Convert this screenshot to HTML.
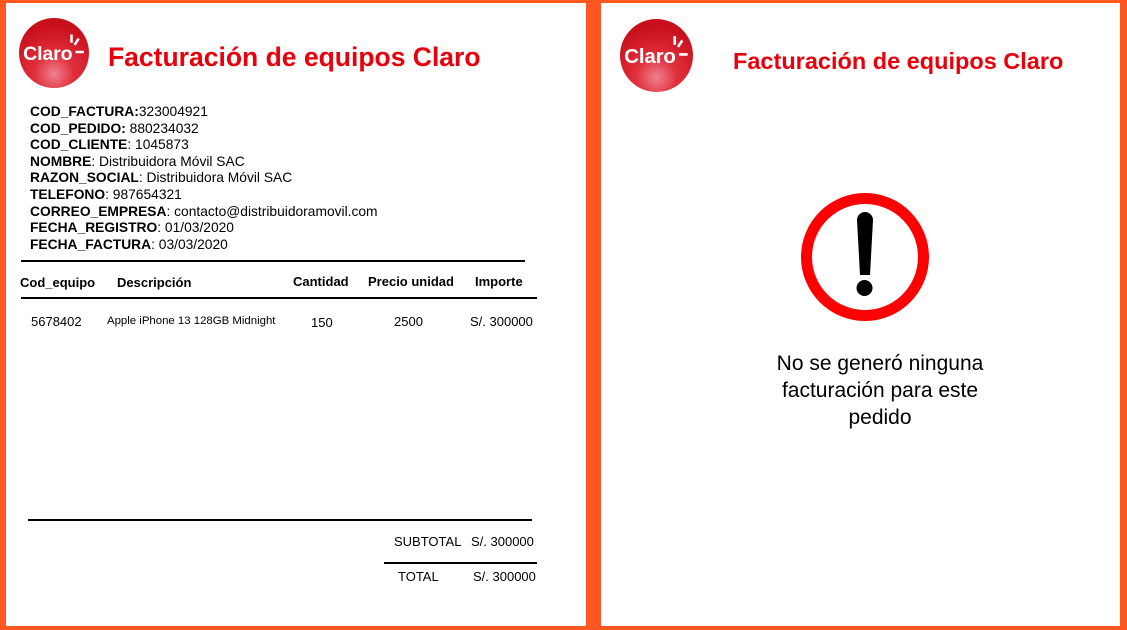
<!DOCTYPE html>
<html><head><meta charset="utf-8"><style>
*{margin:0;padding:0;box-sizing:border-box}
body{width:1127px;height:630px;background:#FF5722;position:relative;overflow:hidden;font-family:"Liberation Sans",sans-serif;color:#000}
.p{position:absolute;background:#fff}
.a{position:absolute;white-space:nowrap;line-height:1}
.r{position:absolute;background:#000;height:2px}
.t{color:#e8000b;font-weight:bold}
.info{position:absolute;left:30px;top:104px;font-size:13.8px;line-height:16.6px}
.info b{font-weight:bold}
.h{font-size:13px;font-weight:bold}
.d{font-size:13px}
</style></head><body>
<div class="p" style="left:6px;top:3px;width:580px;height:623px"></div>
<div class="p" style="left:601px;top:3px;width:519px;height:623px"></div>

<svg style="position:absolute;left:19px;top:18px" width="70" height="70" viewBox="0 0 68 68">
<defs><radialGradient id="g1" cx="50%" cy="80%" r="70%"><stop offset="0" stop-color="#f08090"/><stop offset="0.4" stop-color="#e0303c"/><stop offset="1" stop-color="#c8101c"/></radialGradient></defs>
<circle cx="34" cy="34" r="34" fill="url(#g1)"/>
<text x="4" y="41" font-family="Liberation Sans" font-weight="bold" font-size="19" fill="#fff" textLength="48">Claro</text>
<path d="M51 16v8M58 20l-4 6M55 33h8" stroke="#fff" stroke-width="2.4"/>
</svg>
<div class="a t" style="left:108px;top:44px;font-size:26.5px">Facturación de equipos Claro</div>

<div class="info">
<div><b>COD_FACTURA:</b>323004921</div>
<div><b>COD_PEDIDO:</b> 880234032</div>
<div><b>COD_CLIENTE</b>: 1045873</div>
<div><b>NOMBRE</b>: Distribuidora Móvil SAC</div>
<div><b>RAZON_SOCIAL</b>: Distribuidora Móvil SAC</div>
<div><b>TELEFONO</b>: 987654321</div>
<div><b>CORREO_EMPRESA</b>: contacto@distribuidoramovil.com</div>
<div><b>FECHA_REGISTRO</b>: 01/03/2020</div>
<div><b>FECHA_FACTURA</b>: 03/03/2020</div>
</div>

<div class="r" style="left:21px;top:260px;width:504px"></div>
<div class="a h" style="left:20px;top:276px">Cod_equipo</div>
<div class="a h" style="left:117px;top:276px">Descripción</div>
<div class="a h" style="left:293px;top:275px">Cantidad</div>
<div class="a h" style="left:368px;top:275px">Precio unidad</div>
<div class="a h" style="left:475px;top:275px">Importe</div>
<div class="r" style="left:21px;top:297px;width:516px"></div>
<div class="a d" style="left:31px;top:315px">5678402</div>
<div class="a" style="left:107px;top:316px;font-size:11.4px">Apple iPhone 13 128GB Midnight</div>
<div class="a d" style="left:311px;top:316px">150</div>
<div class="a d" style="left:394px;top:315px">2500</div>
<div class="a d" style="left:470px;top:315px">S/. 300000</div>

<div class="r" style="left:28px;top:519px;width:504px"></div>
<div class="a d" style="left:394px;top:535px">SUBTOTAL</div>
<div class="a d" style="left:471px;top:535px">S/. 300000</div>
<div class="r" style="left:384px;top:562px;width:153px"></div>
<div class="a d" style="left:398px;top:570px">TOTAL</div>
<div class="a d" style="left:473px;top:570px">S/. 300000</div>

<svg style="position:absolute;left:620px;top:19px" width="73" height="73" viewBox="0 0 68 68">
<defs><radialGradient id="g2" cx="50%" cy="80%" r="70%"><stop offset="0" stop-color="#f08090"/><stop offset="0.4" stop-color="#e0303c"/><stop offset="1" stop-color="#c8101c"/></radialGradient></defs>
<circle cx="34" cy="34" r="34" fill="url(#g2)"/>
<text x="4" y="41" font-family="Liberation Sans" font-weight="bold" font-size="19" fill="#fff" textLength="48">Claro</text>
<path d="M51 16v8M58 20l-4 6M55 33h8" stroke="#fff" stroke-width="2.4"/>
</svg>
<div class="a t" style="left:733px;top:50px;font-size:23.5px">Facturación de equipos Claro</div>

<svg style="position:absolute;left:795px;top:187px" width="140" height="140" viewBox="0 0 140 140">
<circle cx="70" cy="70" r="58.5" fill="none" stroke="#ff0000" stroke-width="11"/>
<path d="M62 33a8 8 0 0 1 16 0l-3 55h-10z" fill="#000"/>
<circle cx="69.5" cy="101" r="8" fill="#000"/>
</svg>
<div class="a" style="left:730px;top:350px;width:300px;text-align:center;font-size:21px;line-height:27px;white-space:normal">No se generó ninguna<br>facturación para este<br>pedido</div>
</body></html>
